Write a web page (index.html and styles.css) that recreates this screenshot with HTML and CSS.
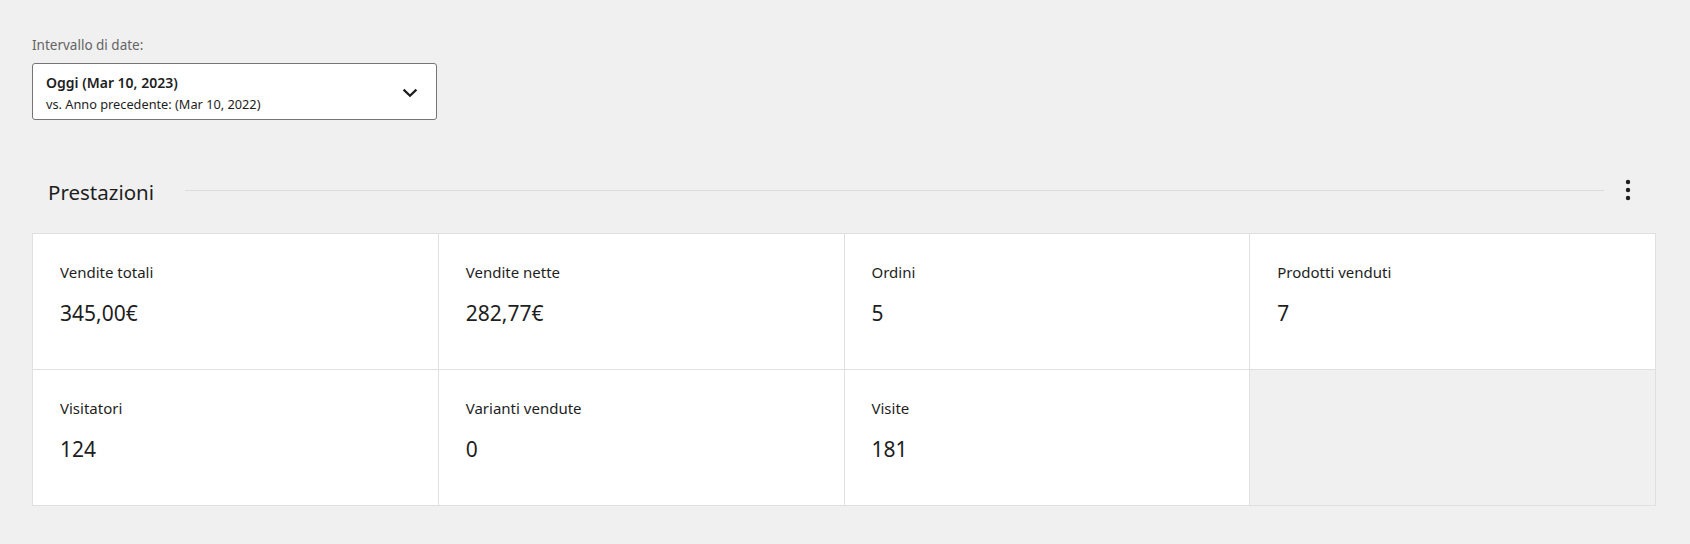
FILE: index.html
```html
<!DOCTYPE html>
<html lang="it">
<head>
<meta charset="utf-8">
<title>Prestazioni</title>
<link rel="stylesheet" href="styles.css">
</head>
<body>
<div class="page">
  <div class="filters">
    <div class="filter-label">Intervallo di date:</div>
    <button class="date-picker" type="button">
      <span class="date-text">
        <span class="date-main">Oggi (Mar 10, 2023)</span>
        <span class="date-compare">vs. Anno precedente: (Mar 10, 2022)</span>
      </span>
      <svg class="chevron" width="16" height="10" viewBox="0 0 16 10" aria-hidden="true">
        <polyline points="1.6,1.6 8,7.8 14.4,1.6" fill="none" stroke="#1e1e1e" stroke-width="2.2"/>
      </svg>
    </button>
  </div>

  <div class="section-header">
    <h2 class="section-title">Prestazioni</h2>
    <div class="section-rule"></div>
    <button class="menu-button" type="button" aria-label="Opzioni">
      <svg width="24" height="24" viewBox="0 0 24 24" aria-hidden="true">
        <circle cx="12" cy="4" r="2.2" fill="#1e1e1e"/>
        <circle cx="12" cy="12" r="2.2" fill="#1e1e1e"/>
        <circle cx="12" cy="20" r="2.2" fill="#1e1e1e"/>
      </svg>
    </button>
  </div>

  <div class="summary">
    <div class="summary-item">
      <div class="item-label">Vendite totali</div>
      <div class="item-value">345,00€</div>
    </div>
    <div class="summary-item">
      <div class="item-label">Vendite nette</div>
      <div class="item-value">282,77€</div>
    </div>
    <div class="summary-item">
      <div class="item-label">Ordini</div>
      <div class="item-value">5</div>
    </div>
    <div class="summary-item">
      <div class="item-label">Prodotti venduti</div>
      <div class="item-value">7</div>
    </div>
    <div class="summary-item">
      <div class="item-label">Visitatori</div>
      <div class="item-value">124</div>
    </div>
    <div class="summary-item">
      <div class="item-label">Varianti vendute</div>
      <div class="item-value">0</div>
    </div>
    <div class="summary-item">
      <div class="item-label">Visite</div>
      <div class="item-value">181</div>
    </div>
    <div class="summary-item summary-empty"></div>
  </div>
</div>
</body>
</html>
```

FILE: styles.css
```css
* {
  box-sizing: border-box;
}

html, body {
  margin: 0;
  padding: 0;
  background: #f0f0f0;
}

body {
  font-family: "Noto Sans", "Open Sans", sans-serif;
  color: #1e1e1e;
}

.page {
  padding: 36px 34px 0 32px;
}

.filter-label {
  font-size: 13.5px;
  line-height: 18px;
  color: #646464;
}

.date-picker {
  margin-top: 9px;
  width: 405px;
  height: 57px;
  display: flex;
  align-items: flex-start;
  justify-content: space-between;
  padding: 9px 18px 0 13px;
  background: #fff;
  border: 1px solid #757575;
  border-radius: 3px;
  font-family: inherit;
  color: #1e1e1e;
  text-align: left;
  cursor: pointer;
}

.date-text {
  display: flex;
  flex-direction: column;
}

.date-main {
  font-size: 14px;
  line-height: 20px;
  font-weight: 600;
}

.date-compare {
  margin-top: 2px;
  font-size: 12.75px;
  line-height: 18px;
}

.chevron {
  margin-top: 15px;
}

.section-header {
  display: flex;
  align-items: center;
  height: 48px;
  margin-top: 46px;
}

.section-title {
  margin: 0;
  padding: 4px 0 0 16px;
  font-size: 20.5px;
  line-height: 28px;
  font-weight: 400;
  color: #1e1e1e;
}

.section-rule {
  flex: 1;
  height: 1px;
  margin-left: 31px;
  background: #dcdcdc;
}

.menu-button {
  width: 48px;
  height: 48px;
  margin-right: 4px;
  padding: 0;
  border: 0;
  background: transparent;
  display: flex;
  align-items: center;
  justify-content: center;
  cursor: pointer;
}

.summary {
  margin-top: 19px;
  display: grid;
  grid-template-columns: repeat(4, 1fr);
  border-top: 1px solid #e0e0e0;
  border-left: 1px solid #e0e0e0;
}

.summary-item {
  height: 136px;
  padding: 28px 28px 0 27px;
  background: #fff;
  border-right: 1px solid #e0e0e0;
  border-bottom: 1px solid #e0e0e0;
}

.summary-empty {
  background: #f0f0f0;
}

.item-label {
  font-size: 15px;
  line-height: 20px;
  color: #1e1e1e;
}

.item-value {
  margin-top: 17px;
  font-size: 21px;
  line-height: 28px;
  color: #1e1e1e;
}
```
